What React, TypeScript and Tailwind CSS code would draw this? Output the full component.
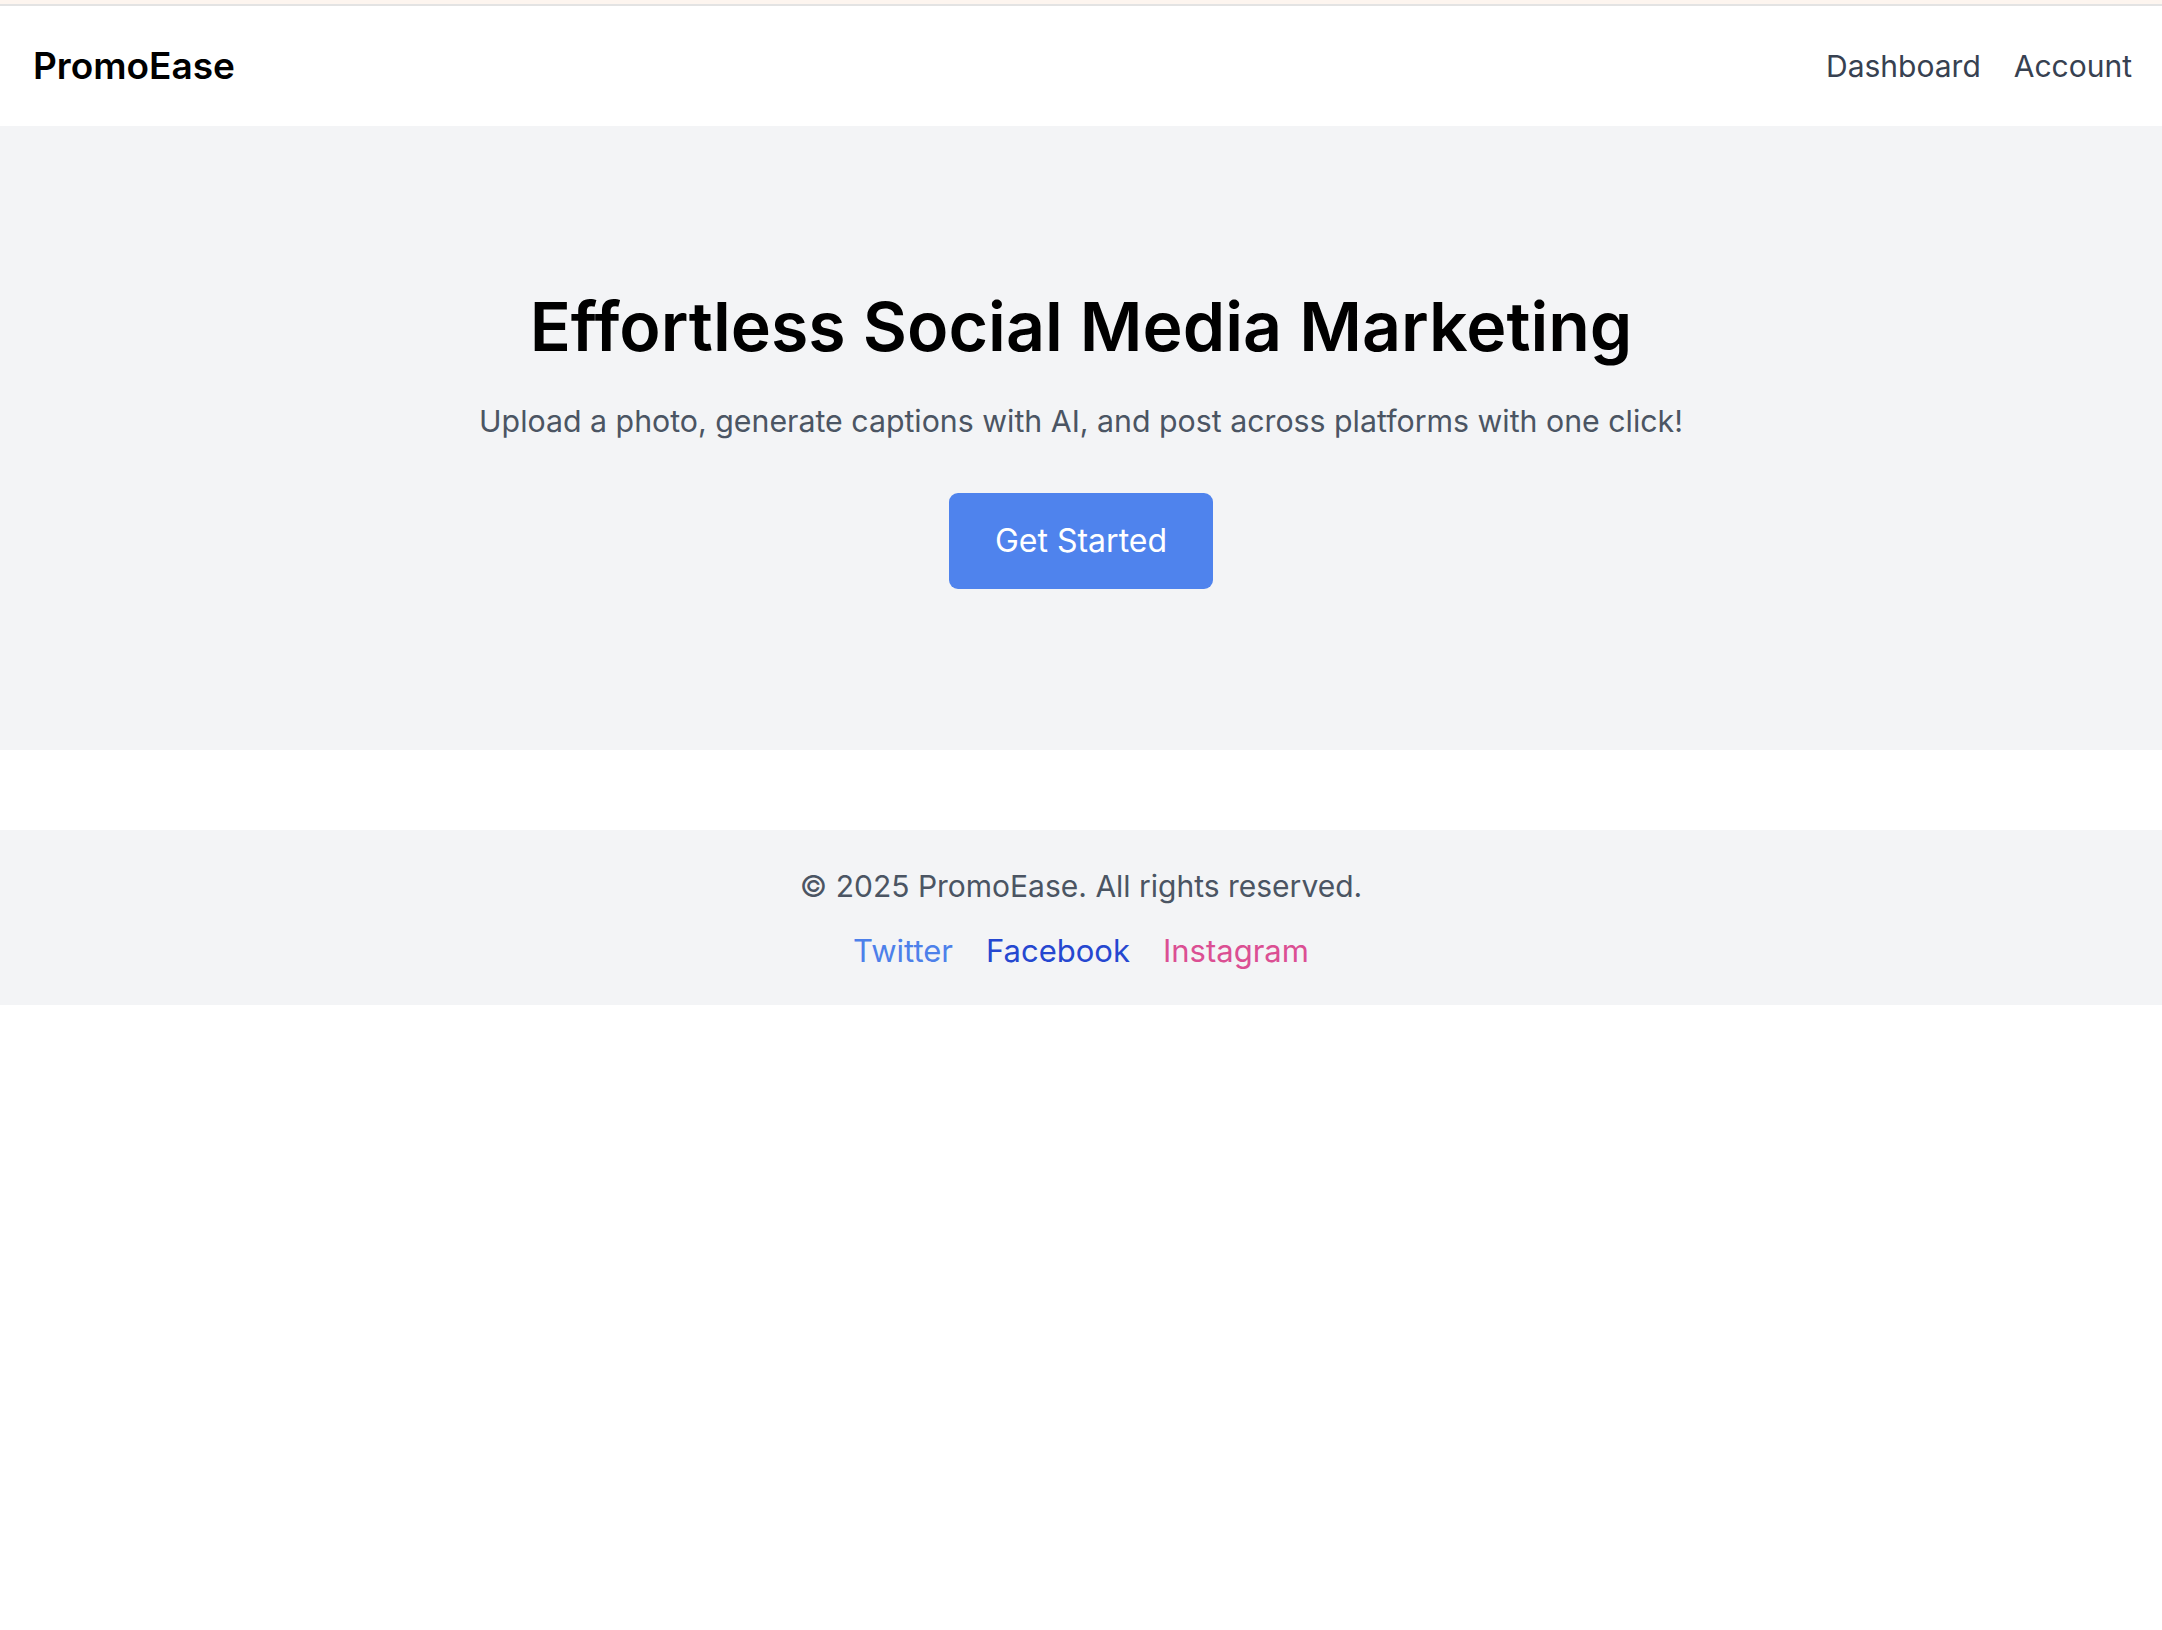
import React from "react";

export default function App() {
  const font = { fontFamily: "Inter, 'Noto Sans', sans-serif" };
  return (
    <div className="min-h-screen bg-white" style={font}>
      <div className="h-[4px] bg-[#fdf5ef]" />
      <div className="h-[2px] bg-[#e3e3e3]" />
      <header className="flex h-[120px] items-center justify-between pl-[33px] pr-[30px]">
        <div className="text-[37px] font-semibold text-black">PromoEase</div>
        <nav className="flex items-center gap-[33px] text-[30px] text-[#374151]">
          <a>Dashboard</a>
          <a>Account</a>
        </nav>
      </header>
      <section className="flex flex-col items-center bg-[#f3f4f6] pt-[166px] pb-[161px]">
        <h1 className="text-[68px] font-semibold leading-none text-black">
          Effortless Social Media Marketing
        </h1>
        <p className="mt-[39px] text-[30.3px] leading-[45px] text-[#4b5563]">
          Upload a photo, generate captions with AI, and post across platforms with one click!
        </p>
        <button className="mt-[49px] flex h-[96px] w-[264px] items-center justify-center rounded-[9px] bg-[#4f83ed] text-[32px] text-white">
          Get Started
        </button>
      </section>
      <div className="h-[80px]" />
      <footer className="flex h-[175px] flex-col items-center bg-[#f3f4f6] pt-[34px]">
        <p className="text-[30px] leading-[45px] text-[#4b5563]">© 2025 PromoEase. All rights reserved.</p>
        <div className="mt-[19px] flex gap-[33px] text-[31px] leading-[45px]">
          <a className="text-[#4d80ea]">Twitter</a>
          <a className="text-[#2547d0]">Facebook</a>
          <a className="text-[#db4f93]">Instagram</a>
        </div>
      </footer>
    </div>
  );
}
